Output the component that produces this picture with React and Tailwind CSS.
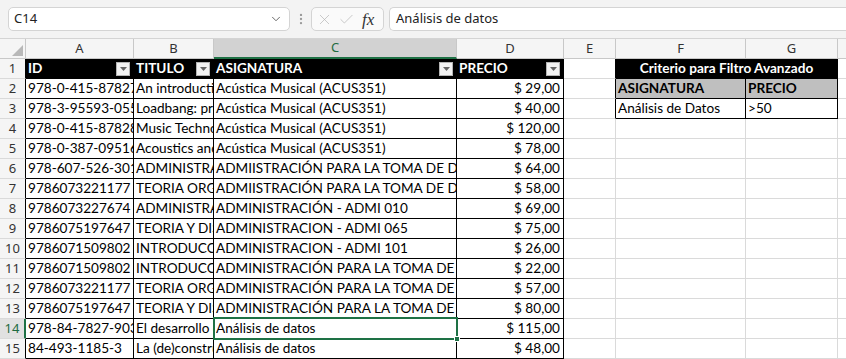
import React from 'react';
import { ChevronDown, X, Check, EllipsisVertical } from 'lucide-react';

const rows = [
  ['978-0-415-87827-2', 'An introduction to Music Technology', 'Acústica Musical (ACUS351)', '$ 29,00'],
  ['978-3-95593-055-4', 'Loadbang: programming electronic sounds', 'Acústica Musical (ACUS351)', '$ 40,00'],
  ['978-0-415-87828-9', 'Music Technology Essentials', 'Acústica Musical (ACUS351)', '$ 120,00'],
  ['978-0-387-09516-5', 'Acoustics and Psychoacoustics', 'Acústica Musical (ACUS351)', '$ 78,00'],
  ['978-607-526-301-4', 'ADMINISTRACIÓN', 'ADMIISTRACIÓN PARA LA TOMA DE DECISIONES', '$ 64,00'],
  ['9786073221177', 'TEORIA ORGANIZACIONAL', 'ADMIISTRACIÓN PARA LA TOMA DE DECISIONES', '$ 58,00'],
  ['9786073227674', 'ADMINISTRACIÓN', 'ADMINISTRACIÓN - ADMI 010', '$ 69,00'],
  ['9786075197647', 'TEORIA Y DISEÑO ORGANIZACIONAL', 'ADMINISTRACION - ADMI 065', '$ 75,00'],
  ['9786071509802', 'INTRODUCCIÓN A LA ADMINISTRACIÓN', 'ADMINISTRACION - ADMI 101', '$ 26,00'],
  ['9786071509802', 'INTRODUCCIÓN A LA ADMINISTRACIÓN', 'ADMINISTRACIÓN PARA LA TOMA DE DECISIONES', '$ 22,00'],
  ['9786073221177', 'TEORIA ORGANIZACIONAL', 'ADMINISTRACIÓN PARA LA TOMA DE DECISIONES', '$ 57,00'],
  ['9786075197647', 'TEORIA Y DISEÑO ORGANIZACIONAL', 'ADMINISTRACIÓN PARA LA TOMA DE DECISIONES', '$ 80,00'],
  ['978-84-7827-903-0', 'El desarrollo de la estadística', 'Análisis de datos', '$ 115,00'],
  ['84-493-1185-3', 'La (de)construcción de datos', 'Análisis de datos', '$ 48,00'],
];

const grid = 'border-[#dadada]';

const Cell = ({ w, cls = '', children }) => (
  <div className={`${w} h-5 shrink-0 border-r border-b overflow-hidden whitespace-nowrap leading-[19px] ${cls}`}>
    {children}
  </div>
);

const FilterButton = () => (
  <div className="w-[14px] h-[14px] mr-[3px] shrink-0 bg-[#f2f2f2] border border-[#b4b4b4] flex items-center justify-center">
    <svg width="7" height="4" viewBox="0 0 7 4">
      <path d="M0 0 L7 0 L3.5 4 Z" fill="#666" />
    </svg>
  </div>
);

const HeadCell = ({ w, label }) => (
  <Cell w={w} cls="border-black bg-black text-white font-bold flex items-center justify-between pl-[2px]">
    <span>{label}</span>
    <FilterButton />
  </Cell>
);

const RowHeader = ({ n, active }) => (
  <div
    className={`w-[26px] h-5 shrink-0 border-b border-[#dadada] flex items-center justify-center text-[13px] font-['Noto_Sans',sans-serif] ${
      active
        ? 'bg-[#e1e1e1] text-[#1e6b41] border-r-2 border-r-[#1e7145]'
        : 'bg-[#f5f5f5] text-[#333] border-r border-r-black'
    }`}
  >
    {n}
  </div>
);

const colHeads = [
  ['A', 'w-[108px]'],
  ['B', 'w-[80px]'],
  ['C', 'w-[243px]'],
  ['D', 'w-[107px]'],
  ['E', 'w-[52px]'],
  ['F', 'w-[130px]'],
  ['G', 'w-[92px]'],
  ['H', 'w-[60px]'],
];

export default function App() {
  return (
    <div className="w-[846px] h-[359px] overflow-hidden bg-white font-['Lato',sans-serif] text-[13.6px] text-black">
      {/* formula bar */}
      <div className="h-[39px] bg-[#f3f3f3] border-b border-[#d4d4d4] flex items-center font-['Noto_Sans',sans-serif] text-[13px] text-[#222]">
        <div className="ml-2 w-[282px] h-6 bg-white border border-[#d4d4d4] rounded-[5px] flex items-center justify-between pl-[5px] pr-[6px]">
          <span>C14</span>
          <ChevronDown size={14} strokeWidth={1.5} color="#555" />
        </div>
        <div className="w-[21px] flex justify-center">
          <EllipsisVertical size={14} color="#9a9a9a" />
        </div>
        <div className="w-[73px] h-6 bg-[#fafafa] border border-[#d4d4d4] rounded-[5px] flex items-center pl-[4px] gap-[5px]">
          <X size={17} strokeWidth={1} color="#b5b5b5" />
          <Check size={17} strokeWidth={1} color="#b5b5b5" />
          <span className="font-['Liberation_Serif',serif] italic text-[17px] leading-none text-[#333] ml-[2px]">fx</span>
        </div>
        <div className="ml-[5px] flex-1 h-6 bg-white border border-[#d4d4d4] rounded-l-[5px] border-r-0 flex items-center pl-[6px]">
          Análisis de datos
        </div>
      </div>

      {/* column headers */}
      <div className="flex h-5 font-['Noto_Sans',sans-serif] text-[13px] text-[#333]">
        <div className="w-[26px] h-5 shrink-0 bg-[#f5f5f5] border-r border-b border-[#c8c8c8] relative">
          <svg className="absolute right-[2px] bottom-[2px]" width="11" height="11" viewBox="0 0 11 11">
            <path d="M11 0 L11 11 L0 11 Z" fill="#b8b8b8" />
          </svg>
        </div>
        {colHeads.map(([l, w]) =>
          l === 'C' ? (
            <div key={l} className={`${w} h-5 shrink-0 bg-[#d2d2d2] border-r border-[#c8c8c8] border-b-2 border-b-[#1e7145] text-[#1e6b41] flex items-center justify-center`}>
              {l}
            </div>
          ) : (
            <div key={l} className={`${w} h-5 shrink-0 bg-[#f5f5f5] border-r border-b border-[#c8c8c8] flex items-center justify-center`}>
              {l}
            </div>
          )
        )}
      </div>

      {/* row 1 */}
      <div className="flex">
        <RowHeader n={1} />
        <HeadCell w="w-[108px]" label="ID" />
        <HeadCell w="w-[80px]" label="TITULO" />
        <HeadCell w="w-[243px]" label="ASIGNATURA" />
        <HeadCell w="w-[107px]" label="PRECIO" />
        <Cell w="w-[52px]" cls={`${grid} border-r-black`} />
        <Cell w="w-[222px]" cls="border-black bg-black text-white font-bold text-center">
          Criterio para Filtro Avanzado
        </Cell>
        <Cell w="w-[60px]" cls={grid} />
      </div>

      {rows.map((r, i) => {
        const n = i + 2;
        const active = n === 14;
        return (
          <div key={n} className="flex">
            <RowHeader n={n} active={active} />
            <Cell w="w-[108px]" cls="border-black pl-[2px]">{r[0]}</Cell>
            <Cell w="w-[80px]" cls="border-black pl-[2px]">{r[1]}</Cell>
            {active ? (
              <div className="w-[243px] h-5 shrink-0 border-r border-b border-black relative whitespace-nowrap leading-[19px] pl-[2px]">
                <div className="overflow-hidden">{r[2]}</div>
                <div className="absolute -left-[1px] -top-[2px] -right-[2px] -bottom-[2px] border-2 border-[#1e7145]" />
                <div className="absolute -right-[4px] -bottom-[4px] w-[6px] h-[6px] bg-[#1e7145] border border-white" />
              </div>
            ) : (
              <Cell w="w-[243px]" cls="border-black pl-[2px]">{r[2]}</Cell>
            )}
            <Cell w="w-[107px]" cls="border-black text-right pr-[3px]">{r[3]}</Cell>
            {n === 2 && (
              <>
                <Cell w="w-[52px]" cls={`${grid} border-r-black`} />
                <Cell w="w-[130px]" cls="border-black bg-[#bfbfbf] font-bold pl-[2px]">ASIGNATURA</Cell>
                <Cell w="w-[92px]" cls="border-black bg-[#bfbfbf] font-bold pl-[2px]">PRECIO</Cell>
              </>
            )}
            {n === 3 && (
              <>
                <Cell w="w-[52px]" cls={`${grid} border-r-black`} />
                <Cell w="w-[130px]" cls="border-black pl-[2px]">Análisis de Datos</Cell>
                <Cell w="w-[92px]" cls="border-black pl-[2px]">&gt;50</Cell>
              </>
            )}
            {n > 3 && (
              <>
                <Cell w="w-[52px]" cls={grid} />
                <Cell w="w-[130px]" cls={grid} />
                <Cell w="w-[92px]" cls={grid} />
              </>
            )}
            <Cell w="w-[60px]" cls={grid} />
          </div>
        );
      })}
    </div>
  );
}
